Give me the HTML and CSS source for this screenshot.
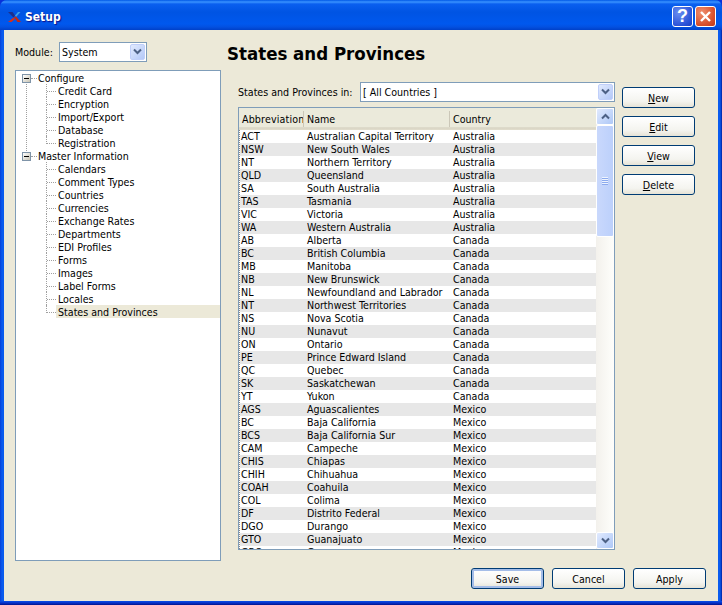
FILE: index.html
```html
<!DOCTYPE html>
<html lang="en">
<head>
<meta charset="utf-8">
<title>Setup</title>
<link rel="stylesheet" href="styles.css">
</head>
<body>
<div class="window">
  <header class="titlebar">
    <svg class="app-icon" width="13" height="10" viewBox="0 0 13 10"><path d="M0 0h4.500L7 3.500 5.500 5.500z" fill="#1c2f8c"/><path d="M7 3.500L10 0h2.500L8 5z" fill="#3fa0e8"/><path d="M5.500 5.500L0 10h3.500L7 7z" fill="#d83018"/><path d="M6 5l2-.5L13 10H9.500z" fill="#c82810"/></svg>
    <span class="title">Setup</span>
    <span class="cap-btn help">?</span>
    <span class="cap-btn close"><svg width="13" height="13" viewBox="0 0 13 13"><path d="M2 2l9 9M11 2l-9 9" stroke="#fff" stroke-width="2.400" fill="none"/></svg></span>
  </header>
  <main class="client">
    <div class="columns">
      <aside class="left">
        <div class="module-row">
          <label class="module-label">Module:</label>
          <div class="combo module-combo"><span class="combo-text">System</span><span class="arrow-btn"><svg class="chev" viewBox="0 0 9 7"><path d="M1 1.500l3.500 3.500L8 1.500" /></svg></span></div>
        </div>
        <div class="tree">
          <div class="node top open"><span class="exp"></span>Configure</div>
          <div class="node child">Credit Card</div>
          <div class="node child">Encryption</div>
          <div class="node child">Import/Export</div>
          <div class="node child">Database</div>
          <div class="node child last">Registration</div>
          <div class="node top"><span class="exp"></span>Master Information</div>
          <div class="node child">Calendars</div>
          <div class="node child">Comment Types</div>
          <div class="node child">Countries</div>
          <div class="node child">Currencies</div>
          <div class="node child">Exchange Rates</div>
          <div class="node child">Departments</div>
          <div class="node child">EDI Profiles</div>
          <div class="node child">Forms</div>
          <div class="node child">Images</div>
          <div class="node child">Label Forms</div>
          <div class="node child">Locales</div>
          <div class="node child last"><span class="sel">States and Provinces</span></div>
        </div>
      </aside>
      <section class="right">
        <h1 class="heading">States and Provinces</h1>
        <div class="body-row">
          <div class="list-col">
            <div class="filter-row">
              <label class="filter-label">States and Provinces in:</label>
              <div class="combo filter-combo"><span class="combo-text">[ All Countries ]</span><span class="arrow-btn"><svg class="chev" viewBox="0 0 9 7"><path d="M1 1.500l3.500 3.500L8 1.500" /></svg></span></div>
            </div>
            <div class="table">
              <div class="table-main">
                <div class="thead">
                  <span class="th c1">Abbreviation</span><span class="th c2">Name</span><span class="th c3">Country</span>
                </div>
                <div class="tbody">
                  <div class="tr"><span class="c1">ACT</span><span class="c2">Australian Capital Territory</span><span class="c3">Australia</span></div>
                  <div class="tr"><span class="c1">NSW</span><span class="c2">New South Wales</span><span class="c3">Australia</span></div>
                  <div class="tr"><span class="c1">NT</span><span class="c2">Northern Territory</span><span class="c3">Australia</span></div>
                  <div class="tr"><span class="c1">QLD</span><span class="c2">Queensland</span><span class="c3">Australia</span></div>
                  <div class="tr"><span class="c1">SA</span><span class="c2">South Australia</span><span class="c3">Australia</span></div>
                  <div class="tr"><span class="c1">TAS</span><span class="c2">Tasmania</span><span class="c3">Australia</span></div>
                  <div class="tr"><span class="c1">VIC</span><span class="c2">Victoria</span><span class="c3">Australia</span></div>
                  <div class="tr"><span class="c1">WA</span><span class="c2">Western Australia</span><span class="c3">Australia</span></div>
                  <div class="tr"><span class="c1">AB</span><span class="c2">Alberta</span><span class="c3">Canada</span></div>
                  <div class="tr"><span class="c1">BC</span><span class="c2">British Columbia</span><span class="c3">Canada</span></div>
                  <div class="tr"><span class="c1">MB</span><span class="c2">Manitoba</span><span class="c3">Canada</span></div>
                  <div class="tr"><span class="c1">NB</span><span class="c2">New Brunswick</span><span class="c3">Canada</span></div>
                  <div class="tr"><span class="c1">NL</span><span class="c2">Newfoundland and Labrador</span><span class="c3">Canada</span></div>
                  <div class="tr"><span class="c1">NT</span><span class="c2">Northwest Territories</span><span class="c3">Canada</span></div>
                  <div class="tr"><span class="c1">NS</span><span class="c2">Nova Scotia</span><span class="c3">Canada</span></div>
                  <div class="tr"><span class="c1">NU</span><span class="c2">Nunavut</span><span class="c3">Canada</span></div>
                  <div class="tr"><span class="c1">ON</span><span class="c2">Ontario</span><span class="c3">Canada</span></div>
                  <div class="tr"><span class="c1">PE</span><span class="c2">Prince Edward Island</span><span class="c3">Canada</span></div>
                  <div class="tr"><span class="c1">QC</span><span class="c2">Quebec</span><span class="c3">Canada</span></div>
                  <div class="tr"><span class="c1">SK</span><span class="c2">Saskatchewan</span><span class="c3">Canada</span></div>
                  <div class="tr"><span class="c1">YT</span><span class="c2">Yukon</span><span class="c3">Canada</span></div>
                  <div class="tr"><span class="c1">AGS</span><span class="c2">Aguascalientes</span><span class="c3">Mexico</span></div>
                  <div class="tr"><span class="c1">BC</span><span class="c2">Baja California</span><span class="c3">Mexico</span></div>
                  <div class="tr"><span class="c1">BCS</span><span class="c2">Baja California Sur</span><span class="c3">Mexico</span></div>
                  <div class="tr"><span class="c1">CAM</span><span class="c2">Campeche</span><span class="c3">Mexico</span></div>
                  <div class="tr"><span class="c1">CHIS</span><span class="c2">Chiapas</span><span class="c3">Mexico</span></div>
                  <div class="tr"><span class="c1">CHIH</span><span class="c2">Chihuahua</span><span class="c3">Mexico</span></div>
                  <div class="tr"><span class="c1">COAH</span><span class="c2">Coahuila</span><span class="c3">Mexico</span></div>
                  <div class="tr"><span class="c1">COL</span><span class="c2">Colima</span><span class="c3">Mexico</span></div>
                  <div class="tr"><span class="c1">DF</span><span class="c2">Distrito Federal</span><span class="c3">Mexico</span></div>
                  <div class="tr"><span class="c1">DGO</span><span class="c2">Durango</span><span class="c3">Mexico</span></div>
                  <div class="tr"><span class="c1">GTO</span><span class="c2">Guanajuato</span><span class="c3">Mexico</span></div>
                  <div class="tr"><span class="c1">GRO</span><span class="c2">Guerrero</span><span class="c3">Mexico</span></div>
                </div>
              </div>
              <div class="vscroll">
                <span class="sb-btn"><svg class="chev" viewBox="0 0 9 7"><path d="M1 5.500L4.500 2 8 5.500" /></svg></span>
                <div class="sb-track">
                  <div class="sb-thumb"><span class="grip"></span></div>
                </div>
                <span class="sb-btn"><svg class="chev" viewBox="0 0 9 7"><path d="M1 1.500l3.500 3.500L8 1.500" /></svg></span>
              </div>
            </div>
          </div>
          <div class="side-buttons">
            <button class="btn"><u>N</u>ew</button>
            <button class="btn"><u>E</u>dit</button>
            <button class="btn"><u>V</u>iew</button>
            <button class="btn"><u>D</u>elete</button>
          </div>
        </div>
      </section>
    </div>
    <footer class="footer">
      <button class="btn default">Save</button>
      <button class="btn">Cancel</button>
      <button class="btn">Apply</button>
    </footer>
  </main>
</div>
</body>
</html>
```

FILE: styles.css
```css
* { box-sizing: border-box; }
html, body { margin: 0; padding: 0; }
body { width: 722px; height: 605px; overflow: hidden; background: #0831d9; font-family: "DejaVu Sans Condensed", "DejaVu Sans", sans-serif; font-size: 10.600px; color: #000; }
.window { width: 722px; height: 605px; display: flex; flex-direction: column; background: linear-gradient(to top, #00138c 0, #0730c8 2px, #0a50e8 4px) bottom / 100% 4px no-repeat, linear-gradient(to right, #0840d8 0, #0a5bee 2px, #0a5bee 720px, #0020a0 722px); border-radius: 7px 7px 0 0; overflow: hidden; }
.titlebar { height: 30px; flex: none; display: flex; align-items: center; padding: 3px 6px 0 8px; background: linear-gradient(to bottom, #0058e6 0, #3a93ff 2px, #0a5fef 4px, #0054e3 12px, #0058ee 24px, #0350e0 27px, #0040c8 30px); }
.app-icon { margin-right: 4px; flex: none; }
.title { flex: 1; font-family: "DejaVu Sans Condensed", "DejaVu Sans", sans-serif; font-weight: bold; font-size: 12px; color: #fff; text-shadow: 1px 1px 1px #0f1089; }
.cap-btn { width: 21px; height: 21px; border: 1px solid #fff; border-radius: 3px; margin-left: 2px; display: flex; align-items: center; justify-content: center; color: #fff; font: bold 18px "Liberation Sans", sans-serif; }
.help { background: radial-gradient(circle at 30% 30%, #6a8ef0, #2a52d8 70%, #1c3cc0); }
.close { background: radial-gradient(circle at 30% 30%, #f09070, #d8502c 65%, #c03818); }
.client { flex: 1; margin: 0 4px 4px; background: #ece9d8; display: flex; flex-direction: column; min-height: 0; }
.columns { flex: 1; display: flex; padding: 11px 0 0 11px; min-height: 0; }
.left { width: 206px; flex: none; display: flex; flex-direction: column; }
.module-row { display: flex; align-items: center; height: 21px; margin-bottom: 8px; }
.module-label { width: 44px; }
.combo { background: #fff; border: 1px solid #7f9db9; display: flex; align-items: center; height: 20px; padding: 1px; }
.combo-text { flex: 1; padding-left: 1px; white-space: nowrap; }
.module-combo { width: 88px; }
.arrow-btn { width: 15px; height: 16px; flex: none; border-radius: 2px; background: linear-gradient(135deg, #e1eafe, #b3c8f8); border: 1px solid #c0cffa; display: flex; align-items: center; justify-content: center; }
.chev { width: 9px; height: 7px; display: block; }
.chev path { fill: none; stroke: #4d6185; stroke-width: 2; }
.tree { width: 206px; height: 491px; background: #fff; border: 1px solid #7f9db9; }
.node { position: relative; height: 13px; line-height: 15px; white-space: nowrap; }
.top { padding-left: 22px; }
.top::after { content: ""; position: absolute; left: 15px; top: 7px; width: 6px; border-top: 1px dotted #a0a0a0; }
.open::before { content: ""; position: absolute; left: 10px; top: 8px; height: 80px; border-left: 1px dotted #a0a0a0; }
.child { padding-left: 42px; }
.child::before { content: ""; position: absolute; left: 30px; top: 0; height: 13px; border-left: 1px dotted #a0a0a0; }
.child.last::before { height: 8px; }
.child::after { content: ""; position: absolute; left: 31px; top: 7px; width: 9px; border-top: 1px dotted #a0a0a0; }
.exp { position: absolute; left: 6px; top: 3px; width: 9px; height: 9px; border: 1px solid #7f94a8; background: linear-gradient(135deg, #fff, #c8c4b4); z-index: 1; }
.exp::before { content: ""; position: absolute; left: 1px; top: 3px; width: 5px; height: 1px; background: #000; }
.sel { display: block; height: 13px; background: #ece9d8; margin-left: -2px; padding-left: 2px; }
.right { flex: 1; min-width: 0; padding-left: 6px; display: flex; flex-direction: column; }
.heading { margin: 0; height: 30px; font-size: 18.500px; line-height: 26px; font-weight: bold; font-family: "DejaVu Sans Condensed", "DejaVu Sans", sans-serif; }
.body-row { display: flex; padding-left: 11px; flex: 1; min-height: 0; }
.list-col { width: 377px; flex: none; display: flex; flex-direction: column; }
.filter-row { display: flex; align-items: center; height: 19px; margin-top: 11px; margin-bottom: 6px; }
.filter-label { width: 122px; white-space: nowrap; }
.filter-combo { flex: 1; height: 20px; }
.table { height: 443px; display: flex; border: 1px solid #7f9db9; background: #fff; overflow: hidden; }
.table-main { flex: 1; min-width: 0; display: flex; flex-direction: column; }
.thead { display: flex; height: 22px; flex: none; background: linear-gradient(to bottom, #ebeadb, #ebeadb 85%, #d8d4c4 90%, #e2decd); align-items: center; }
.th { height: 16px; line-height: 16px; border-right: 1px solid #cbc7b8; padding-left: 3px; overflow: hidden; white-space: nowrap; }
.th.c1 { width: 65px; letter-spacing: 0.150px; }
.th.c2 { width: 146px; }
.th.c3 { flex: 1; border-right: 0; }
.tbody { flex: 1; overflow: hidden; border-left: 1px dotted #8a8a8a; }
.tr { display: flex; height: 13px; line-height: 13px; white-space: nowrap; }
.tr:nth-child(even) { background: #e7e7e7; }
.tr .c1 { width: 64px; padding-left: 1px; }
.tr .c2 { width: 146px; padding-left: 3px; }
.tr .c3 { flex: 1; padding-left: 3px; }
.vscroll { width: 18px; flex: none; display: flex; flex-direction: column; background: linear-gradient(to right, #f3f1ec, #fefefb); }
.sb-btn { height: 17px; flex: none; background: linear-gradient(135deg, #e1eafe, #aec8f7); border: 1px solid #fff; border-radius: 2px; display: flex; align-items: center; justify-content: center; }
.sb-track { flex: 1; }
.sb-thumb { height: 112px; background: linear-gradient(to right, #c9d8fc, #bcd0fb); border: 1px solid #fff; border-radius: 2px; display: flex; align-items: center; justify-content: center; }
.grip { width: 6px; height: 8px; background: repeating-linear-gradient(to bottom, #eef4fe 0 1px, #8caaee 1px 2px); }
.side-buttons { display: flex; flex-direction: column; gap: 8px; padding: 16px 0 0 7px; }
.btn { width: 73px; height: 21px; flex: none; padding: 0; border: 1px solid #003c74; border-radius: 3px; background: linear-gradient(to bottom, #ffffff, #f4f4ef 70%, #e6e3d6); font-family: "DejaVu Sans Condensed", "DejaVu Sans", sans-serif; font-size: 10.600px; color: #000; }
.btn.default { box-shadow: inset 0 0 0 2px #a4bde8; }
.footer { flex: none; display: flex; justify-content: flex-end; gap: 8px; height: 34px; padding: 1px 12px 0 0; }
```
